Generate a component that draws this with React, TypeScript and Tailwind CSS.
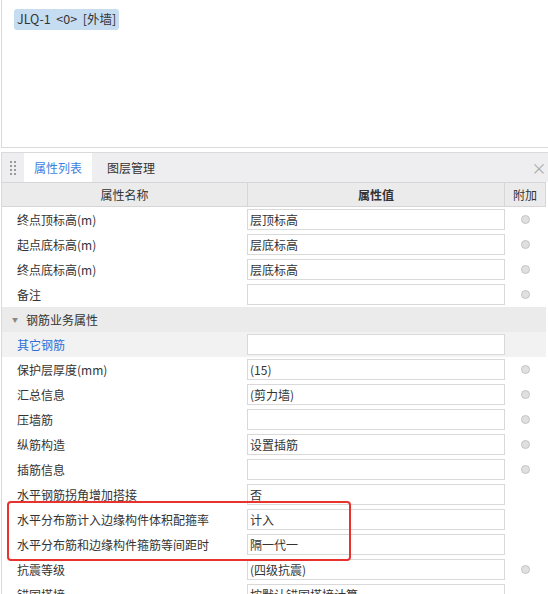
import React from 'react';

// ─── Data ─────────────────────────────────────────────────────────────────────

type Row =
  | { kind: 'prop'; name: string; value: string; extra: boolean; link?: boolean }
  | { kind: 'group'; name: string };

const rows: Row[] = [
  { kind: 'prop', name: '终点顶标高(m)', value: '层顶标高', extra: true },
  { kind: 'prop', name: '起点底标高(m)', value: '层底标高', extra: true },
  { kind: 'prop', name: '终点底标高(m)', value: '层底标高', extra: true },
  { kind: 'prop', name: '备注', value: '', extra: true },
  { kind: 'group', name: '钢筋业务属性' },
  { kind: 'prop', name: '其它钢筋', value: '', extra: false, link: true },
  { kind: 'prop', name: '保护层厚度(mm)', value: '(15)', extra: true },
  { kind: 'prop', name: '汇总信息', value: '(剪力墙)', extra: true },
  { kind: 'prop', name: '压墙筋', value: '', extra: true },
  { kind: 'prop', name: '纵筋构造', value: '设置插筋', extra: true },
  { kind: 'prop', name: '插筋信息', value: '', extra: true },
  { kind: 'prop', name: '水平钢筋拐角增加搭接', value: '否', extra: false },
  { kind: 'prop', name: '水平分布筋计入边缘构件体积配箍率', value: '计入', extra: false },
  { kind: 'prop', name: '水平分布筋和边缘构件箍筋等间距时', value: '隔一代一', extra: false },
  { kind: 'prop', name: '抗震等级', value: '(四级抗震)', extra: true },
  { kind: 'prop', name: '锚固搭接', value: '按默认锚固搭接计算', extra: false },
];

const font = 'font-["Noto_Sans_CJK_SC","Noto_Sans",sans-serif]';

// ─── Component ────────────────────────────────────────────────────────────────

export default function App() {
  return (
    <div className={`relative w-[548px] h-[594px] overflow-hidden bg-white text-[12px] leading-none text-[#333] ${font}`}>
      {/* Drawing area */}
      <div className="ml-px h-[148px] border-l border-b border-[#dadada]">
        <div className="ml-3 mt-[9px] inline-flex h-[21px] items-center rounded-[3px] bg-[#c6dcf1] px-[3px] whitespace-pre text-[12.5px] text-[#333]">
          {'JLQ-1  <0>  [外墙]'}
        </div>
      </div>

      {/* Property panel */}
      <div className="ml-px mt-1 border-l border-t border-[#dadada]">
        {/* Tabs */}
        <div className="flex h-[29px] items-stretch bg-[#eeeef0]">
          <div className="grid w-[22px] place-items-center">
            <div className="grid grid-cols-2 gap-x-[2px] gap-y-[2px]">
              {Array.from({ length: 8 }).map((_, i) => (
                <span key={i} className="h-[2px] w-[2px] bg-[#9a9a9a]" />
              ))}
            </div>
          </div>
          <div className="flex w-[68px] items-center justify-center bg-white text-[#3d7fe0]">
            属性列表
          </div>
          <div className="flex w-[78px] items-center justify-center text-[#333]">图层管理</div>
          <div className="flex-1" />
          <div className="flex w-[14px] items-center justify-center pr-1 text-[15px] text-[#a8a8a8]">×</div>
        </div>

        {/* Table header */}
        <div className="flex h-[25px] w-[544px] border-t border-b border-[#d6d6d6] bg-[#ebebeb]">
          <div className="flex w-[245px] items-center justify-center">属性名称</div>
          <div className="flex w-[257px] items-center justify-center border-l border-[#d6d6d6] font-bold">属性值</div>
          <div className="flex flex-1 items-center justify-center border-l border-r border-[#d6d6d6]">附加</div>
        </div>

        {/* Rows */}
        {rows.map((row, i) =>
          row.kind === 'group' ? (
            <div key={i} className="flex h-[25px] w-[544px] items-center bg-[#ebebeb]">
              <span className="ml-[10px] mr-[8px] text-[6px] text-[#888]">▼</span>
              {row.name}
            </div>
          ) : (
            <div key={i} className={`flex h-[25px] w-[544px] items-center ${row.link ? 'bg-[#f2f2f2]' : ''}`}>
              <div className={`w-[245px] pl-[15px] ${row.link ? 'text-[#2f6fd8]' : ''}`}>{row.name}</div>
              <div className="flex h-[21px] w-[258px] items-center border border-[#d9d9d9] bg-white pl-[2px]">
                {row.value}
              </div>
              <div className="flex flex-1 items-center justify-center">
                {row.extra && (
                  <span className="h-[9px] w-[9px] rounded-full border border-[#c4c4c4] bg-[#e0e0e0]" />
                )}
              </div>
            </div>
          ),
        )}
      </div>

      {/* Highlight annotation */}
      <div className="pointer-events-none absolute left-[7px] top-[501px] h-[60px] w-[344px] rounded-[4px] border-2 border-[#e8322d]" />
    </div>
  );
}
